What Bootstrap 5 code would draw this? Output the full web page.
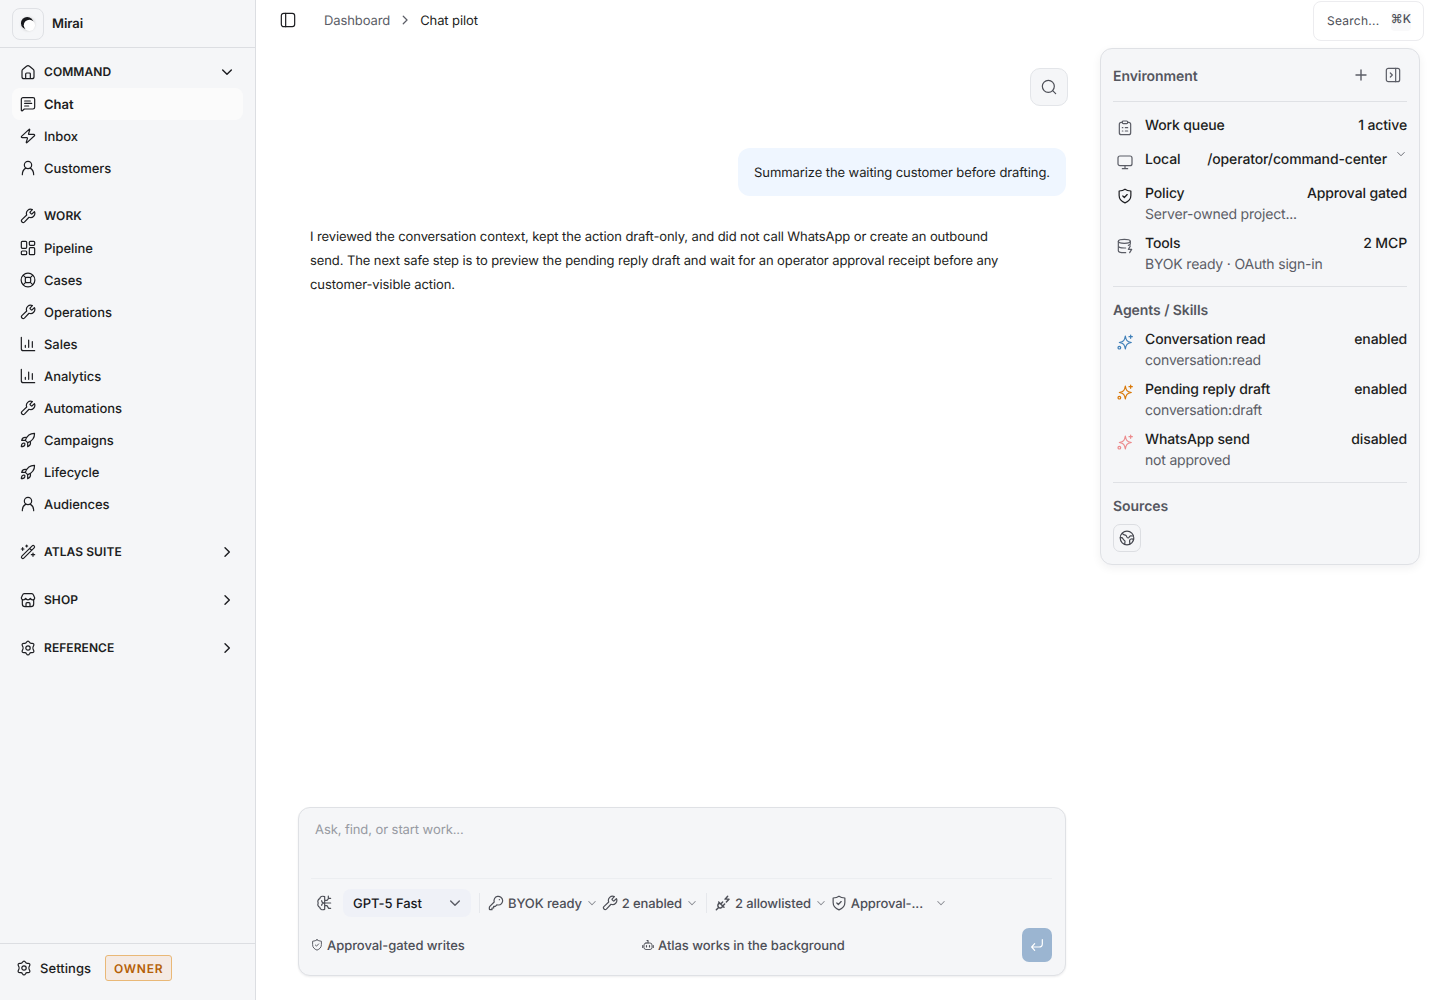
<!DOCTYPE html>
<html lang="en">
<head>
<meta charset="utf-8">
<meta name="viewport" content="width=device-width, initial-scale=1">
<title>Chat pilot</title>
<link href="https://cdn.jsdelivr.net/npm/bootstrap@5.3.0/dist/css/bootstrap.min.css" rel="stylesheet">
<style>
body{font-family:Inter,"Liberation Sans",sans-serif;font-size:13px;line-height:20px;letter-spacing:-.05px;color:#1c1d21;background:#fff;height:100vh;overflow:hidden;text-rendering:geometricPrecision}
.ic{width:16px;height:16px;flex:none;fill:none;stroke:currentColor;stroke-width:1.8;stroke-linecap:round;stroke-linejoin:round;display:block}
.chev{stroke-width:2.1}
.ic-12{width:12px;height:12px}
/* lowers a label by one pixel while its icon keeps its place */
.drop{padding-top:2px!important}
.drop>.ic{margin-top:-2px}
.side{width:256px;background:#f5f6f8;border-right:1px solid #dcdee2}
.brand-row{height:48px;border-bottom:1px solid #dcdee2;padding:0 12px;font-weight:600}
.logo-box{width:32px;height:32px;border:1px solid #dfe1e5;border-radius:8px}
.side-nav{padding:8px 12px}
.side-nav .nav-link{height:32px;padding:0 8px;border-radius:8px;color:#1c1d21;font-weight:500;gap:8px;display:flex;align-items:center}
.side-nav .nav-link.active{background:#fbfbfb;font-weight:600;letter-spacing:0}
.side-nav .group-head{font-size:12px;font-weight:600;letter-spacing:.07px}
.side-nav .nav-group+.nav-group{margin-top:16px}
.side-foot{height:57px;border-top:1px solid #dcdee2;padding:0 16px 8px;font-weight:500;letter-spacing:.05px}
.owner-tag{font-size:12px;font-weight:600;line-height:25px;height:26px;padding:0 8px;margin-left:14px;color:#b45f06;background:#f4eae4;border:1px solid #e9b877;border-radius:3px;letter-spacing:.75px}
.topbar{height:40px;padding:0 16px 0 24px}
.crumbs{margin-left:28px;letter-spacing:-.1px}
.muted{color:#5b5d66}
.search-box{width:111px;height:40px;border:1px solid #ececef;border-radius:8px;padding:0 12px 0 13px;font-size:12px;color:#4d4f57;letter-spacing:.25px;margin-top:2px}
.search-box kbd{background:#f9f9fa;color:#4d4f57;font:500 12px/15px Inter,"DejaVu Sans",sans-serif;padding:0 0 5px;border-radius:4px;height:20px;letter-spacing:0}
.chat-col{width:770px;margin-left:42px;padding:28px 0 24px}
.find-btn{width:38px;height:38px;background:#f5f6f8;border:1px solid #e3e5e9;border-radius:10px;color:#4d4f57;padding:0}
.ask-bubble{background:#eff6ff;border-radius:12px;padding:13px 16px 11px;line-height:24px;margin:42px 2px 0 0;white-space:nowrap;letter-spacing:-.085px}
.reply{width:700px;margin:29px 0 0 12px;line-height:24px;letter-spacing:-.1px}
.composer{width:768px;height:169px;background:#f5f6f8;border:1px solid #dfe1e5;border-radius:12px;box-shadow:0 1px 2px rgba(20,25,40,.08);padding:11px 13px 12px 12px;font-weight:500;color:#4d4f57}
.prompt-area{height:60px;padding:1px 0 0 4px;font-weight:400;color:#979aa2;border-bottom:1px solid #eceef1;letter-spacing:-.08px}
.tools-row{height:49px;padding-left:5px;padding-bottom:1px}
.model-pill{width:128px;height:28px;background:#eff1f7;border-radius:8px;padding:0 8px 0 10px;margin-left:11px;color:#17181c}
.sep{width:1px;height:20px;background:#e6e8ec}
.tool-item{letter-spacing:-.12px}
.tool-item .chev{color:#8a8c93}
.send-btn{width:30px;height:34px;border-radius:7px;background:#9bb5d1;color:#fff;padding:0}
.env{width:320px;height:517px;margin:8px 20px 0 0;background:#f5f6f8;border:1px solid #dfe1e5;border-radius:12px;box-shadow:0 3px 10px rgba(20,25,40,.06);padding:0 12px;font-size:14px;line-height:21px;white-space:nowrap;letter-spacing:-.19px}
.env-title{font-weight:600;color:#55575f;letter-spacing:-.07px}
.env-head{height:53px;border-bottom:1px solid #dfe1e5;padding:0 6px 0 0}
.env-row{gap:12px;padding-left:4px}
.env-row .ic{margin-top:5px}
.env-row .lbl{font-weight:500;letter-spacing:-.13px}
.env-text{min-width:0;margin-right:auto;flex:1 1 0}
.env-sec{border-bottom:1px solid #dfe1e5;padding-top:13px}
.env-row .path-chev{margin:-1px 0 0 -4px}
.src-btn{width:28px;height:28px;border:1px solid #dcdee2;border-radius:7px;color:#44464e}
</style>
</head>
<body class="d-flex">
<svg width="0" height="0" class="d-none" aria-hidden="true">
<symbol id="home" viewBox="0 0 24 24"><path d="M3 10.500c0-1.200.4-1.900 1.300-2.600l5.500-4.600c1.400-1.100 3-1.100 4.400 0l5.500 4.600c.9.700 1.300 1.400 1.300 2.600V19a3 3 0 0 1-3 3H6a3 3 0 0 1-3-3zM8.500 22v-7a1.500 1.500 0 0 1 1.500-1.500h4a1.500 1.500 0 0 1 1.500 1.500v7"/></symbol>
<symbol id="chat" viewBox="0 0 24 24"><path d="M2 21.500V5a2.500 2.500 0 0 1 2.500-2.500h15A2.500 2.500 0 0 1 22 5v12a2.500 2.500 0 0 1-2.500 2.500H6.500L3.500 22C2.800 22.500 2 22.200 2 21.500zM7 7.500h8.500M7 11.200h10.500M7 15h6"/></symbol>
<symbol id="zap" viewBox="0 0 24 24"><path d="M3.200 14.500a1.200 1.200 0 0 1-.9-2L13.500 2c.5-.5 1.300-.1 1.100.6L12.800 8.700a.8.8 0 0 0 .8 1h7.200a1.200 1.200 0 0 1 .9 2L10.500 22c-.5.500-1.300.1-1.100-.6l1.800-5.900a.8.8 0 0 0-.8-1z"/></symbol>
<symbol id="user" viewBox="0 0 24 24"><circle cx="12" cy="7.500" r="5.500"/><path d="M3.500 22c0-4.500 2-8 5.200-9.800M20.500 22c0-4.500-2-8-5.200-9.800"/></symbol>
<symbol id="wrench" viewBox="0 0 24 24"><path d="M15.300 5.700a1 1 0 0 0 0 1.400l1.600 1.600a1 1 0 0 0 1.400 0l3.300-3.300a6.300 6.300 0 0 1-8.100 8.500l-6.900 7.300a2.700 2.700 0 0 1-3.800-3.800l7.300-6.900a6.300 6.300 0 0 1 8.500-8.100z"/></symbol>
<symbol id="grid" viewBox="0 0 24 24"><rect x="2" y="2" width="8" height="10.500" rx="1.500"/><rect x="14" y="2" width="8" height="6" rx="1.500"/><rect x="14" y="11.500" width="8" height="10.500" rx="1.500"/><rect x="2" y="16.500" width="8" height="5.500" rx="1.500"/></symbol>
<symbol id="buoy" viewBox="0 0 24 24"><circle cx="12" cy="12" r="10.300"/><rect x="8" y="8" width="8" height="8" rx="2"/><path d="m5 5 3.500 3.500M19 5l-3.500 3.500M5 19l3.500-3.500M19 19l-3.500-3.500"/></symbol>
<symbol id="chart" viewBox="0 0 24 24"><path d="M2 2v17a3 3 0 0 0 3 3h17M8 14v3M13 6v11M18.500 8.500V17"/></symbol>
<symbol id="rocket" viewBox="0 0 24 24"><path d="M8 12.500C10.500 6 14.500 2 21.800 2.200 22 9.500 18 13.500 11.500 16zM10 8.500C6 7.500 3.500 9 2.500 12.500l5.500 0M15.500 14c1 4-.5 6.500-4 8V16M7 17c-1.500-.8-3.500 0-4.200 1.500C2.200 19.800 2 22 2 22s2.300-.1 3.600-.8C7 20.500 7.800 18.500 7 17z"/></symbol>
<symbol id="wand" viewBox="0 0 24 24"><path d="m2.800 18.300 15.500-15.500a2 2 0 0 1 2.900 2.900L5.700 21.200a2 2 0 0 1-2.900-2.900zM14.500 6.600l2.900 2.900M10 1.500v3M8.500 3h3M4 5.500v4M2 7.500h4M19.500 13.500v5M17 16h5"/></symbol>
<symbol id="shop" viewBox="0 0 24 24"><path d="M3.500 11.500V18a4 4 0 0 0 4 4h9a4 4 0 0 0 4-4v-6.500M2 8.500 4 4.200A2.500 2.500 0 0 1 6.500 2.500h11A2.500 2.500 0 0 1 20 4.200l2 4.300c0 2-1.400 3.200-3.200 3.200-1.700 0-2.800-1-3.300-2.200-.5 1.200-1.700 2.200-3.500 2.200s-3-1-3.500-2.200c-.5 1.200-1.600 2.200-3.300 2.200C3.400 11.700 2 10.500 2 8.500zM9 22v-4.500A1.500 1.500 0 0 1 10.500 16h3a1.500 1.500 0 0 1 1.500 1.500V22"/></symbol>
<symbol id="gear" viewBox="0 0 24 24"><circle cx="12" cy="12" r="3.300"/><path d="M9.700 3.500C10.300 2.300 10.900 1.700 12 1.700s1.700.6 2.300 1.800c.6 1.300 1.700 1.700 3 1.500 1.700-.2 2.700 0 3.300 1s.4 1.900-.5 3.200c-.9 1.200-.9 4.400 0 5.600.9 1.300 1.100 2.200.5 3.200s-1.600 1.200-3.300 1c-1.300-.2-2.400.2-3 1.500-.6 1.200-1.200 1.800-2.300 1.800s-1.700-.6-2.300-1.800c-.6-1.300-1.700-1.700-3-1.500-1.700.2-2.700 0-3.300-1s-.4-1.900.5-3.200c.9-1.200.9-4.400 0-5.600C3 7.900 2.800 7 3.400 6s1.600-1.200 3.300-1c1.300.2 2.400-.2 3-1.500z"/></symbol>
<symbol id="down" viewBox="0 0 24 24"><path d="m5.500 9 6.500 6.500L18.500 9"/></symbol>
<symbol id="right" viewBox="0 0 24 24"><path d="m9 5.500 6.500 6.500L9 18.500"/></symbol>
<symbol id="panel" viewBox="0 0 24 24"><rect x="2" y="2" width="20" height="20" rx="3.500"/><path d="M8.500 2v20"/></symbol>
<symbol id="panelr" viewBox="0 0 24 24"><rect x="2" y="2" width="20" height="20" rx="3"/><path d="M16 2v20M8 9l3 3-3 3"/></symbol>
<symbol id="search" viewBox="0 0 24 24"><circle cx="11" cy="11" r="9"/><path d="m17.500 17.500 4.500 4.500"/></symbol>
<symbol id="plus" viewBox="0 0 24 24"><path d="M12 4.500v15M4.500 12h15" stroke-width="2.100"/></symbol>
<symbol id="clip" viewBox="0 0 24 24"><path d="M8 3.500H6.500A3 3 0 0 0 3.500 6.500V19a3 3 0 0 0 3 3h11a3 3 0 0 0 3-3V6.500a3 3 0 0 0-3-3H16"/><rect x="8" y="1.500" width="8" height="4" rx="1.500"/><path d="M12.500 11.500H16M12.500 16.500H16M8 11.500h.8M8 16.500h.8"/></symbol>
<symbol id="monitor" viewBox="0 0 24 24"><rect x="1.500" y="3" width="21" height="14.500" rx="3"/><path d="M12 17.500V22M8 22h8"/></symbol>
<symbol id="shield" viewBox="0 0 24 24"><path d="M12 1.700c2.300 1.600 4.700 2.400 8.800 2.800v6.700c0 5.600-3.500 9-8.800 11.100-5.300-2.100-8.800-5.500-8.800-11.100V4.500C7.300 4.100 9.700 3.300 12 1.700zM8.700 12l2.300 2.300L15.300 9.800"/></symbol>
<symbol id="db" viewBox="0 0 24 24"><ellipse cx="11" cy="5" rx="9" ry="3"/><path d="M2 5v14c0 1.700 4 3 9 3h2M20 5v4M2 12c0 1.700 4 3 9 3h2M20 8.500c0 1.200-1 2-3 2.500M20 12l-3 5h5l-3 5"/></symbol>
<symbol id="spark" viewBox="0 0 24 24"><path d="M12.500 3c1.200 7 2.500 8.300 9 9.700-6.500 1.300-7.800 2.700-9 9.800-1.200-7.100-2.500-8.500-9-9.800 6.500-1.400 7.800-2.700 9-9.700zM20.500 1.500v5M18 4h5"/><circle cx="3.500" cy="20.500" r="2"/></symbol>
<symbol id="globe" viewBox="0 0 24 24"><circle cx="12" cy="12" r="10.200"/><path d="M5 4.800c1 2.500 2.800 2.700 4.500 3 2.500.5 1.500 4 4 4.200 2.200.2 1.500-2.800 3.800-3.200L21.500 9M2 11c3 0 4 1.200 4.500 3s2.500 1.300 2.500 3.300L8.500 21.500M22 14c-2-.8-5.500-1-6 1.500-.4 2 .5 3 .2 5.300"/></symbol>
<symbol id="brain" viewBox="0 0 24 24"><path d="M13 2.500C9 1 6 2.500 5.700 5.500 3 6.500 2 9.500 3.300 12 2 14.500 3 17.500 5.700 18.500 6 21.500 9 23 13 21.500M13 2.500v19M8.500 8.500c0 2 1 3 4 3.500M8.500 15.500c0-2 1-3 4-3.500M13 12h9M13 8h3.500L19 5h3M13 16h3.500l2.500 4h3M18.500 1.500V5"/></symbol>
<symbol id="key" viewBox="0 0 24 24"><path d="M15.500 15a6.500 6.500 0 1 0-6.200-4.500L2.800 17c-.5.500-.8 1.200-.8 2v2a1 1 0 0 0 1 1h3v-2.500h2.500V17H11l2.500-2.300c.6.200 1.300.3 2 .3zM17 7h.1"/></symbol>
<symbol id="plug" viewBox="0 0 24 24"><path d="m5.500 10.500 8 8M7 12c-3 1.500-3.500 4-1.800 6.200s4.800 1.500 6.300-1.200M9 13l2.500-2.500M12 16l2.500-2.500M5 19l-3 3M19 2l-4 4.200h6L17 10.500" stroke-width="2.200"/></symbol>
<symbol id="bot" viewBox="0 0 24 24"><rect x="4" y="8" width="16" height="13" rx="4"/><path d="M12 8V3h-2M1.500 13v4M22.500 13v4M9 13v3M15 13v3" stroke-width="2.300"/></symbol>
<symbol id="enter" viewBox="0 0 24 24"><path d="M20 4v6a5 5 0 0 1-5 5H4M8.500 10 4 15l4.500 5"/></symbol>
</svg>

<aside class="side d-flex flex-column flex-shrink-0">
  <div class="brand-row d-flex align-items-center gap-2">
    <span class="logo-box d-flex align-items-center justify-content-center"><svg width="22" height="22" viewBox="0 0 22 22"><defs><filter id="soft" x="-50%" y="-50%" width="200%" height="200%"><feGaussianBlur stdDeviation="1.100"/></filter></defs><circle cx="11" cy="11" r="7" fill="#aaa" opacity=".45" filter="url(#soft)"/><circle cx="10.200" cy="10.200" r="6.200" fill="#17181c"/><circle cx="12.400" cy="12.300" r="5.600" fill="#fff"/></svg></span>
    <span>Mirai</span>
  </div>
  <nav class="side-nav flex-grow-1">
    <div class="nav-group nav flex-column">
      <a class="nav-link group-head"><svg class="ic"><use href="#home"/></svg>COMMAND<svg class="ic chev ms-auto"><use href="#down"/></svg></a>
      <a class="nav-link drop active"><svg class="ic"><use href="#chat"/></svg>Chat</a>
      <a class="nav-link drop"><svg class="ic"><use href="#zap"/></svg>Inbox</a>
      <a class="nav-link drop"><svg class="ic"><use href="#user"/></svg>Customers</a>
    </div>
    <div class="nav-group nav flex-column">
      <a class="nav-link group-head"><svg class="ic"><use href="#wrench"/></svg>WORK</a>
      <a class="nav-link drop"><svg class="ic"><use href="#grid"/></svg>Pipeline</a>
      <a class="nav-link drop"><svg class="ic"><use href="#buoy"/></svg>Cases</a>
      <a class="nav-link drop"><svg class="ic"><use href="#wrench"/></svg>Operations</a>
      <a class="nav-link drop"><svg class="ic"><use href="#chart"/></svg>Sales</a>
      <a class="nav-link drop"><svg class="ic"><use href="#chart"/></svg>Analytics</a>
      <a class="nav-link drop"><svg class="ic"><use href="#wrench"/></svg>Automations</a>
      <a class="nav-link drop"><svg class="ic"><use href="#rocket"/></svg>Campaigns</a>
      <a class="nav-link drop"><svg class="ic"><use href="#rocket"/></svg>Lifecycle</a>
      <a class="nav-link drop"><svg class="ic"><use href="#user"/></svg>Audiences</a>
    </div>
    <div class="nav-group nav flex-column"><a class="nav-link group-head"><svg class="ic"><use href="#wand"/></svg>ATLAS SUITE<svg class="ic chev ms-auto"><use href="#right"/></svg></a></div>
    <div class="nav-group nav flex-column"><a class="nav-link group-head"><svg class="ic"><use href="#shop"/></svg>SHOP<svg class="ic chev ms-auto"><use href="#right"/></svg></a></div>
    <div class="nav-group nav flex-column"><a class="nav-link group-head"><svg class="ic"><use href="#gear"/></svg>REFERENCE<svg class="ic chev ms-auto"><use href="#right"/></svg></a></div>
  </nav>
  <div class="side-foot d-flex align-items-center">
    <svg class="ic me-2"><use href="#gear"/></svg><span class="drop">Settings</span><span class="owner-tag">OWNER</span>
  </div>
</aside>

<div class="flex-grow-1 d-flex flex-column">
  <header class="topbar d-flex align-items-center">
    <svg class="ic"><use href="#panel"/></svg>
    <div class="crumbs drop d-flex align-items-center"><span class="muted">Dashboard</span><svg class="ic chev mx-2 muted" style="width:14px;height:14px"><use href="#right"/></svg><span>Chat pilot</span></div>
    <div class="search-box ms-auto d-flex align-items-center justify-content-between flex-shrink-0"><span>Search...</span><kbd>⌘K</kbd></div>
  </header>
  <div class="d-flex flex-grow-1 justify-content-between">
    <main class="chat-col d-flex flex-column">
      <button class="find-btn btn align-self-end d-flex align-items-center justify-content-center flex-shrink-0" aria-label="Find"><svg class="ic"><use href="#search"/></svg></button>
      <div class="ask-bubble align-self-end">Summarize the waiting customer before drafting.</div>
      <div class="reply">I reviewed the conversation context, kept the action draft-only, and did not call WhatsApp or create an outbound send. The next safe step is to preview the pending reply draft and wait for an operator approval receipt before any customer-visible action.</div>
      <section class="composer mt-auto d-flex flex-column">
        <div class="prompt-area">Ask, find, or start work...</div>
        <div class="tools-row d-flex align-items-center">
          <svg class="ic"><use href="#brain"/></svg>
          <div class="model-pill drop d-flex align-items-center justify-content-between"><span>GPT-5 Fast</span><svg class="ic chev muted"><use href="#down"/></svg></div>
          <span class="sep mx-2"></span>
          <div class="tool-item drop d-flex align-items-center gap-1"><svg class="ic"><use href="#key"/></svg>BYOK ready<svg class="ic ic-12 chev"><use href="#down"/></svg></div>
          <div class="tool-item drop d-flex align-items-center gap-1 ms-1"><svg class="ic"><use href="#wrench"/></svg>2 enabled<svg class="ic ic-12 chev"><use href="#down"/></svg></div>
          <span class="sep mx-2"></span>
          <div class="tool-item drop d-flex align-items-center gap-1"><svg class="ic"><use href="#plug"/></svg>2 allowlisted<svg class="ic ic-12 chev"><use href="#down"/></svg></div>
          <div class="tool-item drop d-flex align-items-center gap-1 ms-1"><svg class="ic"><use href="#shield"/></svg>Approval-...<svg class="ic ic-12 chev ms-2"><use href="#down"/></svg></div>
        </div>
        <div class="d-flex align-items-center justify-content-between">
          <div class="drop d-flex align-items-center gap-1"><svg class="ic ic-12"><use href="#shield"/></svg>Approval-gated writes</div>
          <div class="drop d-flex align-items-center gap-1"><svg class="ic ic-12"><use href="#bot"/></svg>Atlas works in the background</div>
          <button class="send-btn btn d-flex align-items-center justify-content-center" aria-label="Send"><svg class="ic"><use href="#enter"/></svg></button>
        </div>
      </section>
    </main>
    <aside class="env flex-shrink-0">
      <div class="env-head d-flex align-items-center"><span class="env-title drop me-auto">Environment</span><svg class="ic muted me-3"><use href="#plus"/></svg><svg class="ic muted"><use href="#panelr"/></svg></div>
      <div class="env-sec" style="height:185px">
        <div class="env-row d-flex" style="height:34px"><svg class="ic muted"><use href="#clip"/></svg><span class="lbl me-auto">Work queue</span><span class="lbl">1 active</span></div>
        <div class="env-row d-flex" style="height:34px"><svg class="ic muted"><use href="#monitor"/></svg><span class="lbl me-auto">Local</span><span class="lbl">/operator/command-center</span><svg class="ic ic-12 muted path-chev"><use href="#down"/></svg></div>
        <div class="env-row d-flex" style="height:50px"><svg class="ic"><use href="#shield"/></svg><div class="env-text"><div class="lbl">Policy</div><div class="muted">Server-owned project...</div></div><span class="lbl">Approval gated</span></div>
        <div class="env-row d-flex"><svg class="ic muted"><use href="#db"/></svg><div class="env-text"><div class="lbl">Tools</div><div class="muted">BYOK ready · OAuth sign-in</div></div><span class="lbl">2 MCP</span></div>
      </div>
      <div class="env-sec" style="height:196px">
        <div class="env-title" style="height:29px">Agents / Skills</div>
        <div class="env-row d-flex" style="height:50px"><svg class="ic" style="color:#3f7fb8"><use href="#spark"/></svg><div class="env-text"><div class="lbl">Conversation read</div><div class="muted">conversation:read</div></div><span class="lbl">enabled</span></div>
        <div class="env-row d-flex" style="height:50px"><svg class="ic" style="color:#d97706"><use href="#spark"/></svg><div class="env-text"><div class="lbl">Pending reply draft</div><div class="muted">conversation:draft</div></div><span class="lbl">enabled</span></div>
        <div class="env-row d-flex"><svg class="ic" style="color:#ec8a8c"><use href="#spark"/></svg><div class="env-text"><div class="lbl">WhatsApp send</div><div class="muted">not approved</div></div><span class="lbl">disabled</span></div>
      </div>
      <div class="env-title" style="padding-top:13px;height:41px">Sources</div>
      <div class="src-btn d-flex align-items-center justify-content-center"><svg class="ic"><use href="#globe"/></svg></div>
    </aside>
  </div>
</div>
<script src="https://cdn.jsdelivr.net/npm/bootstrap@5.3.0/dist/js/bootstrap.bundle.min.js"></script>
</body>
</html>
